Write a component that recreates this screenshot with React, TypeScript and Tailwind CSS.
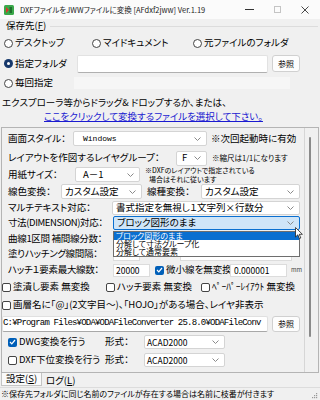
import type { ReactNode } from "react"

const Chevron = () => (
  <svg width="7" height="4" viewBox="0 0 7 4" className="shrink-0">
    <polyline points="0.5,0.5 3.5,3.5 6.5,0.5" fill="none" stroke="#8a8a8a" strokeWidth="1" />
  </svg>
)

const Combo = ({ className = "", children }: { className?: string; children?: ReactNode }) => (
  <div className={`flex items-center justify-between border rounded-[2px] pr-[5px] shrink-0 whitespace-nowrap ${className}`}>
    <span>{children}</span>
    <Chevron />
  </div>
)

const Radio = ({ on }: { on?: boolean }) =>
  on ? (
    <span className="w-[9px] h-[9px] rounded-full bg-[#16386b] flex items-center justify-center shrink-0">
      <span className="w-[3px] h-[3px] rounded-full bg-white" />
    </span>
  ) : (
    <span className="w-[9px] h-[9px] rounded-full border border-[#444] bg-white shrink-0" />
  )

const Check = ({ on }: { on?: boolean }) =>
  on ? (
    <span className="w-[9px] h-[9px] rounded-[2px] bg-[#005fb8] flex items-center justify-center shrink-0">
      <svg width="7" height="6" viewBox="0 0 7 6">
        <polyline points="1,3 2.8,4.8 6,1" fill="none" stroke="white" strokeWidth="1.2" />
      </svg>
    </span>
  ) : (
    <span className="w-[9px] h-[9px] rounded-[2px] border border-[#444] bg-white shrink-0" />
  )

const mono = "font-['Liberation_Mono','Noto_Sans_CJK_JP',monospace]"

export default function App() {
  return (
    <div className="w-[320px] h-[400px] overflow-hidden bg-[#f0f0f0] text-black text-[9.5px] leading-none font-['Noto_Sans_CJK_JP',sans-serif] [font-feature-settings:'palt'] flex flex-col">
      {/* title bar */}
      <div className="h-[19px] shrink-0 bg-[#fbfbfb] flex items-center">
        <svg width="10" height="10" viewBox="0 0 10 10" className="ml-[4px] shrink-0">
          <rect x="0" y="0" width="10" height="10" rx="1.5" fill="#3aa84a" />
          <path d="M2 2 L5 5 L2 8 Z" fill="#d9362b" />
          <rect x="5.5" y="2" width="2.5" height="6" fill="#1f6e2c" />
        </svg>
        <span className="ml-[6px] text-[7.5px] text-[#222] whitespace-nowrap">
          DXFファイルをJWWファイルに変換 [AFdxf2jww] Ver.1.19
        </span>
        <div className="ml-auto mr-[1px] flex items-center h-full">
          <span className="w-[28px] flex justify-center">
            <span className="w-[9px] h-px bg-[#333]" />
          </span>
          <span className="w-[28px] flex justify-center">
            <span className="w-[7px] h-[7px] border border-[#c4c4c4]" />
          </span>
          <span className="w-[28px] flex justify-center">
            <svg width="8" height="8" viewBox="0 0 8 8">
              <path d="M0.5 0.5 L7.5 7.5 M7.5 0.5 L0.5 7.5" stroke="#333" strokeWidth="0.9" />
            </svg>
          </span>
        </div>
      </div>

      {/* group: 保存先 */}
      <div className="h-[14px] shrink-0 flex items-center pl-[6px]">
        <span className="whitespace-nowrap">
          保存先(<span className="underline">F</span>)
        </span>
        <span className="flex-1 h-px bg-[#dcdcdc] ml-[4px] mr-[2px]" />
      </div>
      <div className="mt-[3px] h-[14px] shrink-0 flex items-center pl-[4px] whitespace-nowrap">
        <div className="w-[88px] flex items-center gap-[2px]">
          <Radio />
          <span>デスクトップ</span>
        </div>
        <div className="w-[101px] flex items-center gap-[2px]">
          <Radio />
          <span>マイドキュメント</span>
        </div>
        <div className="flex items-center gap-[2px]">
          <Radio />
          <span>元ファイルのフォルダ</span>
        </div>
      </div>
      <div className="mt-[4px] h-[19px] shrink-0 flex items-center pl-[4px] whitespace-nowrap">
        <div className="w-[73px] flex items-center gap-[2px]">
          <Radio on />
          <span>指定フォルダ</span>
        </div>
        <div className="w-[191px] h-[18px] bg-white border border-[#e2e2e2] border-b-[#b0b0b0] rounded-[2px]" />
        <button className="ml-[4px] w-[28px] h-[17px] bg-[#fdfdfd] border border-[#d0d0d0] rounded-[3px] text-[8px] flex items-center justify-center">
          参照
        </button>
      </div>
      <div className="mt-[3px] h-[14px] shrink-0 flex items-center pl-[4px] whitespace-nowrap">
        <div className="w-[70px] flex items-center gap-[2px]">
          <Radio />
          <span>毎回指定</span>
        </div>
        <div className="w-[216px] h-[12px] bg-[#f6f6f6]" />
      </div>

      <div className="mt-[7px] h-[12px] shrink-0 flex items-center pl-[2px] whitespace-nowrap">
        エクスプローラ等からドラッグ& ドロップするか、または、
      </div>
      <div className="mt-[2px] h-[12px] shrink-0 flex items-center pl-[44px] whitespace-nowrap">
        <span className="underline text-[#1a1ad0]">ここをクリックして変換するファイルを選択して下さい。</span>
      </div>

      {/* settings panel */}
      <div className="mt-[4px] ml-[1px] w-[318px] h-[246px] shrink-0 border border-[#b4b4b4] flex overflow-hidden">
        <div className="w-[303px] h-full border-r border-[#d6d6d6] relative flex flex-col">
          {/* 画面スタイル */}
          <div className="mt-[2px] h-[17px] flex items-center whitespace-nowrap">
            <span className="w-[71px] pl-[6px] shrink-0">画面スタイル：</span>
            <Combo className={`w-[134px] h-[15px] bg-white border-[#d4d4d4] pl-[9px] text-[8px] ${mono}`}>Windows</Combo>
            <span className="ml-[4px]">※次回起動時に有効</span>
          </div>
          {/* レイアウト */}
          <div className="mt-[3px] h-[16px] flex items-center whitespace-nowrap">
            <span className="w-[174px] pl-[6px] shrink-0">レイアウトを作図するレイヤグループ：</span>
            <Combo className="w-[31px] h-[15px] bg-white border-[#d4d4d4] pl-[5px]">F</Combo>
            <span className="ml-[5px] text-[7.5px]">※縮尺は1/1になります</span>
          </div>
          {/* 用紙サイズ */}
          <div className="h-[17px] flex items-center whitespace-nowrap">
            <span className="w-[73px] pl-[6px] shrink-0">用紙サイズ：</span>
            <Combo className="w-[65px] h-[15px] bg-white border-[#d4d4d4] pl-[7px]">A－1</Combo>
            <span className="ml-[5px] text-[7px] leading-[9px] flex flex-col">
              <span>※DXFのレイアウトで指定されている</span>
              <span className="pl-[4px]">場合はそれに従います</span>
            </span>
          </div>
          {/* 線色 / 線種 */}
          <div className="h-[17px] flex items-center whitespace-nowrap">
            <span className="w-[59px] pl-[6px] shrink-0">線色変換：</span>
            <Combo className="w-[81px] h-[15px] bg-white border-[#d4d4d4] pl-[3px]">カスタム設定</Combo>
            <span className="ml-[5px] w-[54px] shrink-0">線種変換：</span>
            <Combo className="w-[99px] h-[15px] bg-white border-[#d4d4d4] pl-[3px]">カスタム設定</Combo>
          </div>
          {/* マルチテキスト */}
          <div className="h-[15px] flex items-center whitespace-nowrap">
            <span className="w-[110px] pl-[6px] shrink-0">マルチテキスト対応：</span>
            <Combo className="w-[188px] h-[14px] bg-white border-[#d4d4d4] pl-[3px]">書式指定を無視し１文字列×行数分</Combo>
          </div>
          {/* 寸法 */}
          <div className="h-[16px] flex items-center whitespace-nowrap">
            <span className="w-[111px] pl-[6px] shrink-0 tracking-[-0.4px]">寸法(DIMENSION)対応：</span>
            <Combo className="w-[187px] h-[14px] bg-[#cfe5f8] border-[#0a6fd0] pl-[3px]">ブロック図形のまま</Combo>
          </div>
          {/* 曲線 */}
          <div className="h-[15px] flex items-center whitespace-nowrap">
            <span className="w-[111px] pl-[6px] shrink-0 tracking-[-0.3px]">曲線1区間 補間線分数：</span>
            <div className="w-[27px] h-[13px] bg-white border border-[#dcdcdc]" />
          </div>
          {/* 塗り */}
          <div className="h-[16px] flex items-center whitespace-nowrap">
            <span className="w-[111px] pl-[6px] shrink-0 tracking-[-0.3px]">塗りハッチング線間隔：</span>
            <div className="w-[27px] h-[13px] bg-white border border-[#dcdcdc]" />
            <div className="ml-[40px] w-[112px] h-[13px] bg-white border border-[#dcdcdc]" />
          </div>
          {/* ハッチ */}
          <div className="h-[16px] flex items-center whitespace-nowrap">
            <span className="w-[111px] pl-[6px] shrink-0 tracking-[-0.3px]">ハッチ１要素最大線数：</span>
            <div className="w-[37px] h-[13px] bg-white border border-[#dcdcdc] pl-[2px] flex items-center text-[8.5px]">20000</div>
            <span className="ml-[5px]">
              <Check on />
            </span>
            <span className="ml-[2px] w-[64px] shrink-0">微小線を無変換</span>
            <div className="w-[57px] h-[13px] bg-white border border-[#dcdcdc] pl-[3px] flex items-center text-[8.5px]">0.000001</div>
            <span className="ml-[4px] text-[6px] text-[#444]">mm</span>
          </div>
          {/* checkboxes */}
          <div className="h-[18px] flex items-center whitespace-nowrap">
            <div className="w-[104px] flex items-center gap-[2px]">
              <Check />
              <span>塗潰し要素 無変換</span>
            </div>
            <div className="w-[95px] flex items-center gap-[2px]">
              <Check />
              <span>ハッチ要素 無変換</span>
            </div>
            <div className="flex items-center gap-[2px]">
              <Check />
              <span>ﾍﾟｰﾊﾟｰﾚｲｱｳﾄ 無変換</span>
            </div>
          </div>
          <div className="h-[18px] flex items-center gap-[2px] whitespace-nowrap">
            <Check />
            <span>画層名に「@」(2文字目～)、「HOJO」がある場合、レイヤ非表示</span>
          </div>
          {/* converter path */}
          <div className="h-[19px] flex items-center whitespace-nowrap">
            <div className={`w-[266px] h-[16px] bg-white border border-[#e0e0e0] border-b-[#a8a8a8] rounded-[2px] flex items-center text-[9px] tracking-[-0.8px] ${mono}`}>
              C:¥Program Files¥ODA¥ODAFileConverter 25.8.0¥ODAFileConv
            </div>
            <button className="ml-[4px] w-[28px] h-[16px] bg-[#fdfdfd] border border-[#d0d0d0] rounded-[3px] text-[8px] flex items-center justify-center">
              参照
            </button>
          </div>
          {/* DWG */}
          <div className="h-[18px] flex items-center whitespace-nowrap">
            <div className="w-[103px] pl-[6px] flex items-center gap-[2px] shrink-0">
              <Check on />
              <span>DWG変換を行う</span>
            </div>
            <span className="w-[39px] shrink-0">形式：</span>
            <Combo className="w-[81px] h-[14px] bg-white border-[#d4d4d4] pl-[2px] text-[8.5px]">ACAD2000</Combo>
          </div>
          <div className="h-[18px] flex items-center whitespace-nowrap">
            <div className="w-[103px] pl-[6px] flex items-center gap-[2px] shrink-0">
              <Check />
              <span>DXF下位変換を行う</span>
            </div>
            <span className="w-[39px] shrink-0">形式：</span>
            <Combo className="w-[81px] h-[14px] bg-white border-[#d4d4d4] pl-[2px] text-[8.5px]">ACAD2000</Combo>
          </div>

          {/* open dropdown list */}
          <div className="absolute left-[111px] top-[103px] w-[187px] h-[26px] bg-white border border-[#6e6e6e] flex flex-col whitespace-nowrap text-[8px]">
            <div className="h-[8px] leading-[8px] bg-[#0a6fd0] text-white pl-[2px]">ブロック図形のまま</div>
            <div className="h-[8px] leading-[8px] pl-[2px]">分解して寸法グループ化</div>
            <div className="h-[8px] leading-[8px] pl-[2px]">分解して通常要素</div>
          </div>
          {/* mouse cursor */}
          <svg width="8" height="13" viewBox="0 0 8 13" className="absolute left-[293px] top-[99px]">
            <path d="M0.5 0.5 L0.5 10 L2.8 7.8 L4.4 11.6 L5.8 11 L4.3 7.3 L7.4 7.3 Z" fill="white" stroke="#222" strokeWidth="0.8" />
          </svg>
        </div>
        {/* scrollbar */}
        <div className="flex-1 pt-[9px] pl-[4px]">
          <div className="w-[2px] h-[200px] bg-[#8a8a8a] rounded-full" />
        </div>
      </div>

      {/* tabs */}
      <div className="h-[14px] shrink-0 flex items-start whitespace-nowrap">
        <div className="ml-[1px] w-[41px] h-[13px] bg-[#fafafa] border-x border-b border-[#c4c4c4] pl-[4px] flex items-center">
          設定(<span className="underline">S</span>)
        </div>
        <div className="ml-[4px] mt-[3px] h-[10px] flex items-center">
          ログ(<span className="underline">L</span>)
        </div>
      </div>

      {/* status */}
      <div className="h-[13px] shrink-0 border-t border-[#dcdcdc] flex items-center pl-[1px] text-[8px] whitespace-nowrap">
        <span>※保存先フォルダに同じ名前のファイルが存在する場合は名前に枝番が付きます</span>
        <svg width="6" height="6" viewBox="0 0 6 6" className="ml-auto mr-[2px] self-end mb-[1px]">
          <rect x="4" y="0" width="1.2" height="1.2" fill="#999" />
          <rect x="2" y="2" width="1.2" height="1.2" fill="#999" />
          <rect x="4" y="2" width="1.2" height="1.2" fill="#999" />
          <rect x="0" y="4" width="1.2" height="1.2" fill="#999" />
          <rect x="2" y="4" width="1.2" height="1.2" fill="#999" />
          <rect x="4" y="4" width="1.2" height="1.2" fill="#999" />
        </svg>
      </div>
    </div>
  )
}
